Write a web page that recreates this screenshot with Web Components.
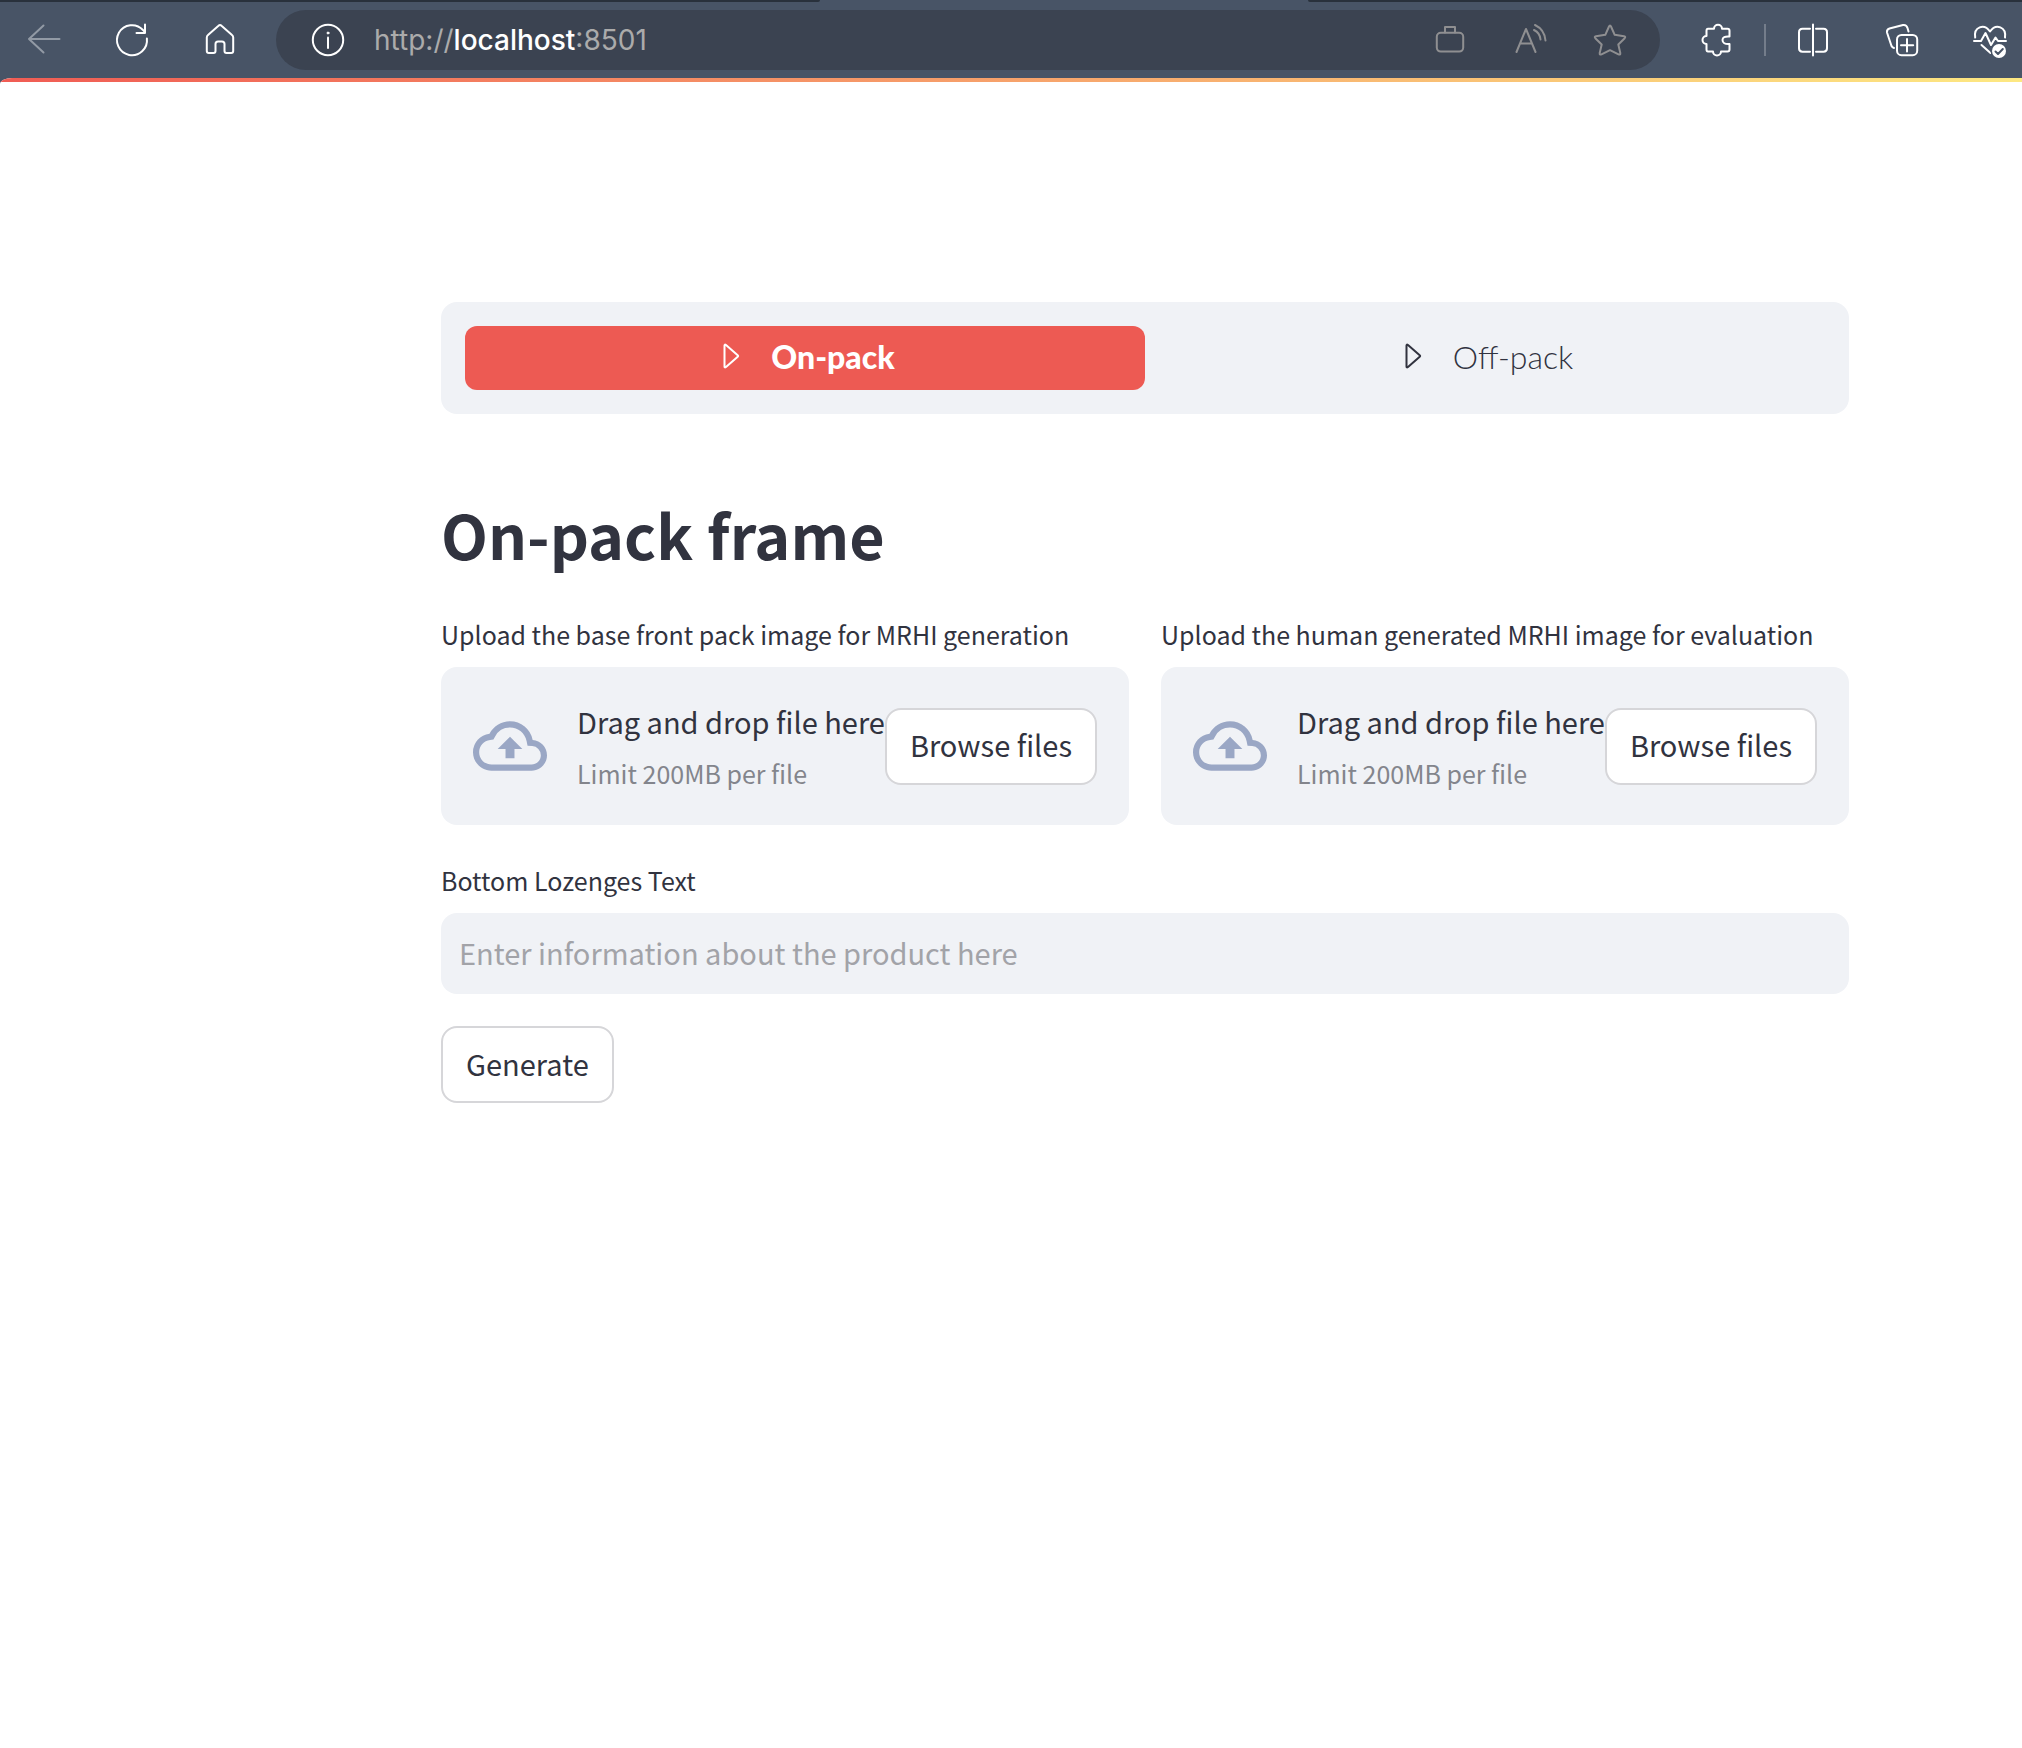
<!DOCTYPE html>
<html lang="en">
<head>
<meta charset="utf-8">
<title>On-pack frame</title>
<style>
  html { height: 100%; }
  body {
    margin: 0; min-height: 100%; display: flex; flex-direction: column;
    background: #485466; color: #31333f; overflow-x: hidden;
    font-family: "Noto Sans CJK SC", "Noto Sans", sans-serif; font-size: 29px;
  }
</style>
</head>
<body>
<browser-toolbar></browser-toolbar>
<page-view>
  <tab-menu></tab-menu>
  <page-title>On-pack frame</page-title>
  <column-pair>
    <file-uploader label="Upload the base front pack image for MRHI generation"></file-uploader>
    <file-uploader label="Upload the human generated MRHI image for evaluation"></file-uploader>
  </column-pair>
  <text-field label="Bottom Lozenges Text" placeholder="Enter information about the product here"></text-field>
  <outline-button>Generate</outline-button>
</page-view>

<script>
const define = (name, html, setup) => {
  const template = document.createElement('template');
  template.innerHTML = html;
  customElements.define(name, class extends HTMLElement {
    constructor() {
      super();
      this.attachShadow({ mode: 'open' }).append(template.content.cloneNode(true));
    }
    connectedCallback() { if (setup) setup(this, this.shadowRoot); }
  });
};

const icons = {
  back: '<path d="M31.5 15H1M15.5 1.500L1 15L15.500 28.500"/>',
  reload: '<path d="M30.900 14.500A15 15 0 1 1 27 6L29 8.500M29 0.500V9H20.500"/>',
  home: '<path d="M14.500 1.800Q16 .3 17.500 1.800L28 11Q29.200 12 29.200 13.500V27Q29.200 29 27.200 29H22.500Q20.500 29 20.500 27V20Q20.500 17.500 18 17.500H14Q11.500 17.500 11.500 20V27Q11.500 29 9.500 29H4.800Q2.800 29 2.800 27V13.500Q2.800 12 4 11Z"/>',
  info: '<circle cx="16" cy="16" r="15.200"/><path d="M16 13.500V24"/><circle cx="16" cy="9" r="1" fill="currentColor" stroke-width="1"/>',
  briefcase: '<rect x="2.800" y="8.800" width="26.400" height="18.800" rx="4"/><path d="M11 8.500V3H21V8.500"/>',
  read: '<path d="M2.500 28L12 5L21.500 28M6 19.500H18M20 6Q26 9 26.500 15.500M21 1Q30.500 5.500 31.500 16.500"/>',
  star: '<path d="M15 2.500Q16 .5 17 2.500L20.700 10.800L30 12.200Q32 12.700 30.700 14.200L24.300 20.500L26.300 29Q26.500 31.200 24.500 30.400L16 26.200L7.500 30.400Q5.500 31.200 5.700 29L7.700 20.500L1.300 14.200Q0 12.700 2 12.200L11.300 10.800Z"/>',
  puzzle: '<path d="M8 4.800H14A4 4 0 0 1 22 4.800H27.500Q29.500 4.800 29.500 6.800V12.500Q22.500 12 22.500 16Q22.500 20.500 29.500 20V25.500Q29.500 27.500 27.500 27.500H21A4 4 0 0 1 13 27.500H8Q6.500 27.500 6.500 25.500V20A4 4 0 0 1 6.500 12V6.800Q6.500 4.800 8 4.800Z"/>',
  split: '<path d="M12 4.800H4.500Q1 4.800 1 8.300V24.300Q1 27.700 4.500 27.700H12M18 4.800H25.500Q29 4.800 29 8.300V24.300Q29 27.700 25.500 27.700H18M15 .5V31.500"/>',
  collections: '<rect x="11" y="11" width="20.200" height="20.200" rx="4.500"/><path d="M21 15V27.500M15 21.200H27.200M22.500 7.500L21.500 4Q20.500 .5 17 1L3.500 4.500Q.5 5.500 1 8.500L5.500 22Q6.300 23.500 8 24"/>',
  health: '<path d="M1.200 13.500C-.5 3 10 -1 16 7.500C22 -1 32.500 3 31 13.500M0 17H7L11.500 9L17 21L21.500 13.500L24 17H32M7.500 21L16.500 29"/><circle cx="25" cy="27" r="8.500" fill="#485466" stroke="none"/><circle cx="25" cy="27" r="7" fill="currentColor" stroke="none"/><path d="M21.500 27.500L24 30L28.800 25" stroke="#485466"/>',
  play: '<path d="M9.500 4.500Q9.500 3 11 4L22.700 14.200Q23.600 15 22.700 15.800L11 26Q9.500 27 9.500 25.500Z"/>'
};

define('line-icon', `
<style>
  :host { display: block; width: 32px; height: 32px; flex: none; }
  svg { display: block; width: 100%; height: 100%; overflow: visible; fill: none; stroke: currentColor; stroke-width: 2; stroke-linecap: round; stroke-linejoin: round; }
</style>
<svg viewBox="0 0 32 32" aria-hidden="true"></svg>`,
(host, root) => { root.querySelector('svg').innerHTML = icons[host.getAttribute('name')]; });

define('browser-toolbar', `
<style>
  :host { display: block; color: #fff; font-family: Inter, sans-serif; overflow: hidden; }
  .strip { display: flex; height: 2px; }
  .strip i { background: #29313c; }
  .strip i:first-child { flex: 820; border-bottom-right-radius: 2px; }
  .strip b { flex: 488; }
  .strip i:last-child { flex: 714; border-bottom-left-radius: 2px; }
  nav { display: flex; align-items: center; padding: 8px 0; margin-right: -12px; }
  button { all: unset; box-sizing: border-box; display: flex; justify-content: center; align-items: center; width: 88px; height: 60px; flex: none; }
  .off { color: #929aa5; }
  .pill { flex: 1; min-width: 0; display: flex; align-items: center; height: 60px; margin: 0 12px; padding: 0 10px; box-sizing: border-box; border-radius: 30px; background: #3b4351; color: #8f8f91; }
  .pill button { width: 80px; }
  .pill .info { width: 84px; color: #fff; }
  .url { flex: 1; min-width: 0; padding-left: 4px; font-size: 28px; line-height: 40px; white-space: nowrap; color: #ababab; }
  .url b { font-weight: 500; color: #fff; }
  hr { width: 2px; height: 32px; margin: 0 4px; border: 0; background: #747d8b; flex: none; }
</style>
<div class="strip"><i></i><b></b><i></i></div>
<nav aria-label="Browser">
  <button class="off" aria-label="Back"><line-icon name="back"></line-icon></button>
  <button aria-label="Reload"><line-icon name="reload"></line-icon></button>
  <button aria-label="Home"><line-icon name="home"></line-icon></button>
  <div class="pill">
    <button class="info" aria-label="Site information"><line-icon name="info"></line-icon></button>
    <div class="url" role="textbox" contenteditable="true" spellcheck="false" aria-label="Address">http://<b>localhost</b>:8501</div>
    <button aria-label="Work profile"><line-icon name="briefcase"></line-icon></button>
    <button aria-label="Read aloud"><line-icon name="read"></line-icon></button>
    <button aria-label="Favourite"><line-icon name="star"></line-icon></button>
  </div>
  <button aria-label="Extensions"><line-icon name="puzzle"></line-icon></button>
  <hr>
  <button aria-label="Split screen"><line-icon name="split"></line-icon></button>
  <button aria-label="Collections"><line-icon name="collections"></line-icon></button>
  <button aria-label="Browser essentials"><line-icon name="health"></line-icon></button>
</nav>`);

define('page-view', `
<style>
  :host { display: block; flex: 1; overflow: hidden; background: #fff; border-top-left-radius: 12px 6px; }
  .bar { height: 4px; background: linear-gradient(90deg, #f05c54, #fde882); }
  main { display: flex; flex-direction: column; gap: 32px; padding: 220px 173px 96px 441px; }
</style>
<div class="bar"></div>
<main><slot></slot></main>`);

define('tab-menu', `
<style>
  :host { display: flex; padding: 24px; border-radius: 16px; background: #f0f2f6; font-family: Lato, sans-serif; }
  button { all: unset; flex: 1; display: flex; justify-content: center; align-items: center; gap: 24px; height: 64px; padding-bottom: 2px; box-sizing: border-box; border-radius: 12px; font-size: 32px; line-height: 40px; font-weight: 300; cursor: pointer; }
  .on { background: #ed5a53; color: #fff; font-weight: 900; }
</style>
<button class="on" aria-pressed="true"><line-icon name="play"></line-icon><span>On-pack</span></button>
<button aria-pressed="false"><line-icon name="play"></line-icon><span>Off-pack</span></button>`);

define('page-title', `
<style>
  :host { display: block; padding-top: 43px; }
  h1 { margin: 0; font-size: 61px; line-height: 90px; font-weight: 700; }
</style>
<h1><slot></slot></h1>`);

define('column-pair', `
<style>
  :host { display: grid; grid-template-columns: 1fr 1fr; gap: 32px; }
</style>
<slot></slot>`);

define('outline-button', `
<style>
  :host { display: block; flex: none; align-self: center; }
  :host(:last-child) { align-self: flex-start; }
  button { display: block; box-sizing: border-box; height: 77px; margin: 0; padding: 0 23px 4px; border: 2px solid #d6d6d9; border-radius: 16px; background: #fff; color: inherit; font: inherit; line-height: 46px; white-space: nowrap; cursor: pointer; }
</style>
<button type="button"><slot></slot></button>`);

define('file-uploader', `
<style>
  :host { display: block; min-width: 0; }
  label { display: block; margin-bottom: 10px; font-size: 25px; line-height: 46px; white-space: nowrap; }
  section { display: flex; align-items: center; padding: 27px 32px; border-radius: 16px; background: #f0f2f6; }
  svg { width: 74px; height: 74px; margin-right: 30px; fill: #9aa7c5; flex: none; }
  .text { flex: 1; min-width: 0; white-space: nowrap; }
  .drop { line-height: 54px; }
  .limit { font-size: 25px; line-height: 50px; color: #83858c; }
  outline-button { align-self: center; }
</style>
<label for="file"></label>
<input id="file" type="file" hidden>
<section>
  <svg viewBox="0 0 24 24" aria-hidden="true"><path d="M19.350 10.040A7.490 7.490 0 0 0 12 4C9.110 4 6.600 5.640 5.350 8.040A5.994 5.994 0 0 0 0 14c0 3.310 2.690 6 6 6h13c2.760 0 5-2.240 5-5 0-2.640-2.050-4.780-4.650-4.960zM19 18H6c-2.210 0-4-1.790-4-4 0-2.050 1.530-3.760 3.560-3.970l1.070-.11.5-.95A5.469 5.469 0 0 1 12 6c2.620 0 4.880 1.860 5.390 4.430l.3 1.500 1.530.11A2.980 2.980 0 0 1 22 15c0 1.650-1.350 3-3 3zM8 13h2.550v3h2.900v-3H16l-4-4z"/></svg>
  <div class="text"><div class="drop">Drag and drop file here</div><div class="limit">Limit 200MB per file</div></div>
  <outline-button>Browse files</outline-button>
</section>`,
(host, root) => {
  root.querySelector('label').textContent = host.getAttribute('label');
  root.querySelector('outline-button').onclick = () => root.querySelector('input').click();
});

define('text-field', `
<style>
  :host { display: block; }
  label { display: block; margin-bottom: 10px; font-size: 25px; line-height: 46px; }
  input { display: block; box-sizing: border-box; width: 100%; height: 81px; margin: 0; padding: 0 18px 4px; border: 0; border-radius: 16px; background: #f0f2f6; color: inherit; font: inherit; }
  input::placeholder { color: #a2a3a8; opacity: 1; }
</style>
<label for="field"></label>
<input id="field" type="text">`,
(host, root) => {
  root.querySelector('label').textContent = host.getAttribute('label');
  root.querySelector('input').placeholder = host.getAttribute('placeholder');
});
</script>
</body>
</html>
